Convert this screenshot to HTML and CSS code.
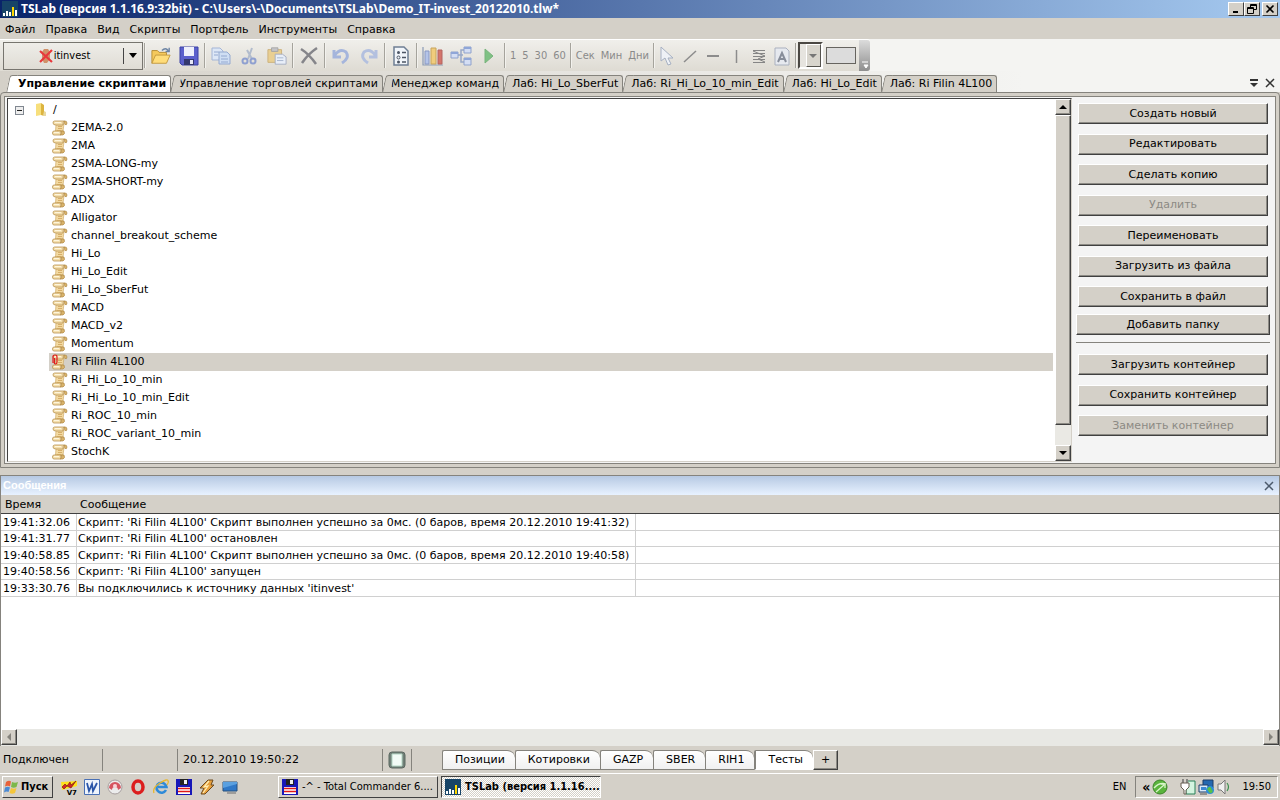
FILE: index.html
```html
<!DOCTYPE html>
<html lang="ru">
<head>
	<meta charset="UTF-8">
	<title>TSLab</title>
<link rel="stylesheet" href="styles.css">
</head>
<body>
<svg class="defs" aria-hidden="true">
	<symbol id="scroll" viewBox="0 0 16 16">
		<path d="M4 4L3.500 11H11l1-7z" fill="#f2d9a2" stroke="#c9a25c" stroke-width=".6"/>
		<path d="M2.500 1h10q-2 1-1.500 4H4Q1 5 1 3t1.500-2z" fill="#f5e0ae" stroke="#b99350" stroke-width=".8"/>
		<path d="M12 1q3-.5 3 2t-2 1.500l-1-1z" fill="#d9b36a" stroke="#a8813e" stroke-width=".6"/>
		<path d="M2 11h7v4H2Q.5 15 .5 13T2 11z" fill="#f5e0ae" stroke="#b99350" stroke-width=".8"/>
		<path d="M9 11h3q1.500 3-1 4H8.500q1.500-2 .5-4z" fill="#d9b36a" stroke="#a8813e" stroke-width=".6"/>
		<path d="M3 2.500h6M2 12.500h5" stroke="#fff6dc"/>
		<path d="M6 6.500h4M6 8.500h4M5 10.500h4" stroke="#cfa45a" stroke-width=".8"/>
	</symbol>
	<symbol id="logo" viewBox="0 0 16 16">
		<path d="M0 0h16v16H0z" fill="#174467"/>
		<path d="M1 12h2v3H1zM4 10h2v5H4zM7 11h2v4H7zM13 9h2v6h-2z" fill="#fff"/>
		<path d="M10 6h2v9h-2z" fill="#ffd800"/>
	</symbol>
	<symbol id="floppy" viewBox="0 0 16 16">
		<path d="M0 0h4v6h8V0h4v16H0z" fill="#1818b8"/>
		<path d="M4 0h8v6H4z" fill="#222"/><path d="M8 1h3v4H8z" fill="#eee"/>
		<path d="M2 8h12v7H2z" fill="#fff"/><path d="M2 9.500h12M2 12.500h12" stroke="#e01818" stroke-width="1.500"/>
	</symbol>
	<symbol id="close" viewBox="0 0 10 10">
		<path d="M1 1l8 8M9 1L1 9" stroke="currentColor" stroke-width="1.500"/>
	</symbol>
</svg>

<div class="app">
	<header class="titlebar">
		<svg class="ico16"><use href="#logo"/></svg>
		<h1>TSLab (версия 1.1.16.9:32bit) - C:\Users\-\Documents\TSLab\Demo_IT-invest_20122010.tlw*</h1>
		<div class="winbtns">
			<button aria-label="Свернуть"><svg viewBox="0 0 10 10"><path d="M2 8h5" stroke="#000" stroke-width="2"/></svg></button>
			<button aria-label="Восстановить"><svg viewBox="0 0 10 10"><path d="M3.500 3.500v-3h6v5h-3M3.500 1.500h6M.5 3.500h6v6h-6zM.5 4.500h6" fill="none" stroke="#000"/></svg></button>
			<button class="last" aria-label="Закрыть"><svg viewBox="0 0 10 10"><path d="M1.500 1.500l7 7M8.500 1.500l-7 7" stroke="#000" stroke-width="1.600"/></svg></button>
		</div>
	</header>

	<nav class="menu">
		<a href="#">Файл</a><a href="#">Правка</a><a href="#">Вид</a><a href="#">Скрипты</a><a href="#">Портфель</a><a href="#">Инструменты</a><a href="#">Справка</a>
	</nav>

	<div class="tray">
		<div class="toolbar">
			<button class="source">
				<span class="source-name"><svg viewBox="0 0 14 16"><path d="M5 1h4l2 3v7l-3 4H5l-2-4V4z" fill="#d09068"/><path d="M1 3l12 11M13 2L1 14" stroke="#e8383c" stroke-width="2.200"/></svg>itinvest</span>
				<span class="drop"></span>
			</button>
			<i class="sep"></i>
			<button class="tool" aria-label="Открыть"><svg viewBox="0 0 22 20"><path d="M1 18V4h6l2 2h8v4" fill="#f5c95c" stroke="#b48a32"/><path d="M1 18L5 9h16l-4 9z" fill="#ffdd7a" stroke="#c1963c"/><path d="M12 4q4-4 7 0M20 1v4h-4" fill="none" stroke="#6c84a4" stroke-width="1.500"/></svg></button>
			<button class="tool" aria-label="Сохранить"><svg viewBox="0 0 20 20"><path d="M1 1h18v18H3l-2-2z" fill="#5b60cc" stroke="#3b40a4"/><path d="M5 1h10v9H5z" fill="#eef0fb"/><path d="M5 13h10v6H5z" fill="#33386e"/><path d="M11 14h3v4h-3z" fill="#e4e6f6"/></svg></button>
			<i class="sep"></i>
			<button class="tool" aria-label="Копировать"><svg viewBox="0 0 20 20"><path d="M1 2h8l3 3v9H1z" fill="#dde7f6" stroke="#a4b5d6"/><path d="M8 6h8l3 3v9H8z" fill="#cfdef3" stroke="#94a9d0"/><path d="M3 6h5M3 9h4M10 10h6M10 13h7M10 16h7" stroke="#94a9d0"/></svg></button>
			<button class="tool" aria-label="Вырезать"><svg viewBox="0 0 20 20"><path d="M13 2L9 13M8 4l5 9" stroke="#b2bccd" stroke-width="2"/><circle cx="6" cy="15" r="2.500" fill="none" stroke="#8fa0d0" stroke-width="2"/><circle cx="14" cy="15" r="2.500" fill="none" stroke="#8fa0d0" stroke-width="2"/></svg></button>
			<button class="tool" aria-label="Вставить"><svg viewBox="0 0 22 20"><path d="M1 3h15v14H1z" fill="#e9cf92" stroke="#cbb07a"/><path d="M5 1h7v4H5z" fill="#c4c4c8" stroke="#a5a5a5"/><path d="M9 8h8l4 3v8H9z" fill="#e8eef8" stroke="#a4acc0"/><path d="M11 12h7M11 15h7" stroke="#a4b4cc"/></svg></button>
			<i class="sep"></i>
			<button class="tool" aria-label="Удалить"><svg viewBox="0 0 20 20"><path d="M2 3q8 5 15 15M18 2Q9 8 3 17" fill="none" stroke="#85858a" stroke-width="2.500"/></svg></button>
			<i class="sep"></i>
			<button class="tool" aria-label="Отменить"><svg viewBox="0 0 20 20"><path d="M3 4v7h7M4 9q5-7 11-3 4 6-4 11" fill="none" stroke="#a5b5dc" stroke-width="3"/></svg></button>
			<button class="tool" aria-label="Повторить"><svg viewBox="0 0 20 20"><path d="M17 4v7h-7M16 9Q11 2 5 6q-4 6 4 11" fill="none" stroke="#b3c0df" stroke-width="3"/></svg></button>
			<i class="sep"></i>
			<button class="tool" aria-label="Свойства"><svg viewBox="0 0 20 20"><path d="M3 1h10l4 4v14H3z" fill="#f1f5fa" stroke="#6f7f94" stroke-width="1.500"/><path d="M11 6.500h4M11 11.500h4M11 16h4" stroke="#4c5564" stroke-width="1.500"/><circle cx="7.500" cy="6.500" r="1.500" fill="#4c5564"/><circle cx="7.500" cy="11.500" r="1.500" fill="none" stroke="#4c5564"/><circle cx="7.500" cy="16" r="1.500" fill="#4c5564"/></svg></button>
			<i class="sep"></i>
			<button class="tool" aria-label="График"><svg class="chart" viewBox="0 0 22 20"><path d="M1 1v18h20" fill="none" stroke="#8b9bb6" stroke-width="1.200"/><path d="M3 5h4v13H3z" fill="#b4c4e8" stroke="#8898c4"/><path d="M9 2h5v16H9z" fill="#f0cc7c" stroke="#c8a45c"/><path d="M16 4h4v14h-4z" fill="#d4746a" stroke="#b46460"/></svg></button>
			<button class="tool" aria-label="Схема"><svg class="chart" viewBox="0 0 22 20"><path d="M8 9h5M13 4H11v12h3M14 4h-2" fill="none" stroke="#98a8c8" stroke-width="1.500"/><path d="M1 6h7v6H1zM14 1h7v6h-7zM14 12h7v7h-7z" fill="#d4def4" stroke="#8fa2cc"/><path d="M1 6h7v2H1zM14 1h7v2h-7zM14 12h7v2h-7z" fill="#8fa6d8"/></svg></button>
			<button class="tool" aria-label="Запуск"><svg viewBox="0 0 20 20"><path d="M6 3l8 7-8 7z" fill="#7fc184" stroke="#79b47d"/></svg></button>
			<i class="sep"></i>
			<button class="word">1</button><button class="word">5</button><button class="word">30</button><button class="word">60</button>
			<i class="sep"></i>
			<button class="word">Сек</button><button class="word">Мин</button><button class="word">Дни</button>
			<i class="sep"></i>
			<button class="tool draw" aria-label="Указатель"><svg viewBox="0 0 20 20"><path d="M4 1v14l4-3 3 7 3-1-3-6h5z" fill="#eef1f6" stroke="#a6b0c2"/></svg></button>
			<button class="tool draw" aria-label="Линия"><svg viewBox="0 0 20 20"><path d="M4 16L16 5" stroke="#8c8c8c" stroke-width="1.500"/></svg></button>
			<button class="tool draw" aria-label="Горизонталь"><svg viewBox="0 0 20 20"><path d="M4 10h12" stroke="#8c8c8c" stroke-width="2"/></svg></button>
			<button class="tool draw" aria-label="Вертикаль"><svg viewBox="0 0 20 20"><path d="M10.500 4v13" stroke="#8c8c8c" stroke-width="1.500"/></svg></button>
			<button class="tool draw" aria-label="Фибоначчи"><svg viewBox="0 0 20 20"><path d="M4 4.500h12M4 7.500h12M4 10.500h12M4 13.500h12M4 16.500h12M4 5l12 5-7 3 7 3" fill="none" stroke="#858585"/></svg></button>
			<button class="tool draw" aria-label="Текст"><svg viewBox="0 0 20 20"><path d="M3 2h11l3 3v14H3z" fill="#e6e9ef" stroke="#aab1bf"/><path d="M6 16l4-9 4 9M8 13h5" fill="none" stroke="#878d9a" stroke-width="2"/></svg></button>
			<i class="sep"></i>
			<button class="color" aria-label="Цвет"><span><b></b></span></button>
			<button class="thick" aria-label="Толщина"></button>
			<button class="grip" aria-label="Ещё"><svg viewBox="0 0 8 8"><path d="M1 1h6M3 4h4L5 7z" stroke="#fff" fill="#fff"/></svg></button>
		</div>
	</div>

	<div class="tabs">
		<button class="tab active">Управление скриптами</button>
		<button class="tab">Управление торговлей скриптами</button>
		<button class="tab">Менеджер команд</button>
		<button class="tab">Лаб: Hi_Lo_SberFut</button>
		<button class="tab">Лаб: Ri_Hi_Lo_10_min_Edit</button>
		<button class="tab">Лаб: Hi_Lo_Edit</button>
		<button class="tab">Лаб: Ri Filin 4L100</button>
		<div class="tabctl">
			<button aria-label="Список вкладок"><svg viewBox="0 0 10 10"><path d="M1 2h8" stroke="#333" stroke-width="2"/><path d="M1 5h8L5 9z" fill="#333"/></svg></button>
			<button aria-label="Закрыть вкладку"><svg><use href="#close"/></svg></button>
		</div>
	</div>

	<main class="dock">
		<div class="dock-in">
			<div class="treebox">
				<ul class="tree">
					<li class="root"><button class="minus" aria-label="Свернуть папку"></button><svg class="folder" viewBox="0 0 16 16"><path d="M3 2l5-1v12l-5 1z" fill="#f7df7c"/><path d="M8 1l3 2v11l-3-1z" fill="#dcb440"/><path d="M11 9l2 1v4h-3z" fill="#e9d9a0"/></svg>/</li>
					<li><svg><use href="#scroll"/></svg>2EMA-2.0</li>
					<li><svg><use href="#scroll"/></svg>2MA</li>
					<li><svg><use href="#scroll"/></svg>2SMA-LONG-my</li>
					<li><svg><use href="#scroll"/></svg>2SMA-SHORT-my</li>
					<li><svg><use href="#scroll"/></svg>ADX</li>
					<li><svg><use href="#scroll"/></svg>Alligator</li>
					<li><svg><use href="#scroll"/></svg>channel_breakout_scheme</li>
					<li><svg><use href="#scroll"/></svg>Hi_Lo</li>
					<li><svg><use href="#scroll"/></svg>Hi_Lo_Edit</li>
					<li><svg><use href="#scroll"/></svg>Hi_Lo_SberFut</li>
					<li><svg><use href="#scroll"/></svg>MACD</li>
					<li><svg><use href="#scroll"/></svg>MACD_v2</li>
					<li><svg><use href="#scroll"/></svg>Momentum</li>
					<li class="sel"><svg viewBox="0 0 16 16"><use href="#scroll"/><path d="M1 9V3q0-2 2-2t2 2v5q0 2-1.500 2T2.500 8V4" fill="none" stroke="#e01c1c" stroke-width="1.200"/></svg>Ri Filin 4L100</li>
					<li><svg><use href="#scroll"/></svg>Ri_Hi_Lo_10_min</li>
					<li><svg><use href="#scroll"/></svg>Ri_Hi_Lo_10_min_Edit</li>
					<li><svg><use href="#scroll"/></svg>Ri_ROC_10_min</li>
					<li><svg><use href="#scroll"/></svg>Ri_ROC_variant_10_min</li>
					<li><svg><use href="#scroll"/></svg>StochK</li>
				</ul>
				<div class="vscroll">
					<button class="sbtn up" aria-label="Вверх"></button>
					<div class="track"><div class="thumb"></div></div>
					<button class="sbtn down" aria-label="Вниз"></button>
				</div>
			</div>
			<aside class="side">
				<div class="group">
					<button>Создать новый</button>
					<button>Редактировать</button>
					<button>Сделать копию</button>
					<button disabled>Удалить</button>
					<button>Переименовать</button>
					<button>Загрузить из файла</button>
					<button>Сохранить в файл</button>
				</div>
				<button class="wide">Добавить папку</button>
				<hr>
				<div class="group short">
					<button>Загрузить контейнер</button>
					<button>Сохранить контейнер</button>
					<button disabled>Заменить контейнер</button>
				</div>
			</aside>
		</div>
	</main>

	<section class="messages">
		<div class="mhead">
			<h2>Сообщения</h2>
			<button aria-label="Закрыть панель"><svg><use href="#close"/></svg></button>
		</div>
		<div class="mbody">
			<table>
				<thead>
					<tr><th class="time">Время</th><th class="text">Сообщение</th><th></th></tr>
				</thead>
				<tbody>
					<tr><td>19:41:32.06</td><td>Скрипт: 'Ri Filin 4L100' Скрипт выполнен успешно за 0мс. (0 баров, время 20.12.2010 19:41:32)</td><td></td></tr>
					<tr><td>19:41:31.77</td><td>Скрипт: 'Ri Filin 4L100' остановлен</td><td></td></tr>
					<tr><td>19:40:58.85</td><td>Скрипт: 'Ri Filin 4L100' Скрипт выполнен успешно за 0мс. (0 баров, время 20.12.2010 19:40:58)</td><td></td></tr>
					<tr><td>19:40:58.56</td><td>Скрипт: 'Ri Filin 4L100' запущен</td><td></td></tr>
					<tr><td>19:33:30.76</td><td>Вы подключились к источнику данных 'itinvest'</td><td></td></tr>
				</tbody>
			</table>
		</div>
		<div class="hscroll">
			<button class="sbtn left" aria-label="Влево"></button>
			<button class="sbtn right" aria-label="Вправо"></button>
		</div>
	</section>

	<footer class="status">
		<span class="cell conn">Подключен</span>
		<span class="cell blank"></span>
		<span class="cell date">20.12.2010 19:50:22</span>
		<span class="cell page"><svg viewBox="0 0 18 18"><rect x="1" y="1" width="16" height="16" rx="3" fill="#718078" stroke="#5b6861"/><path d="M4 3h10v12H4z" fill="#f2fbf6" stroke="#b4d6c4"/></svg></span>
		<div class="sheets">
			<button>Позиции</button>
			<button>Котировки</button>
			<button>GAZP</button>
			<button>SBER</button>
			<button>RIH1</button>
			<button class="on">Тесты</button>
			<button class="plus">+</button>
		</div>
	</footer>

	<div class="taskbar">
		<button class="start"><svg viewBox="0 0 16 16"><path d="M2 3q3-2 5-.5L6 7.500Q4 6 1 7.500z" fill="#e8623a"/><path d="M8 3q3 1.500 6 0l-1.500 5q-3 1.500-5.500 0z" fill="#7cb84a"/><path d="M1 8.500q3-1.500 5 0L4.500 13q-2-1-4.500.5z" fill="#4a8ad4"/><path d="M7 9q3 1.500 5.500 0L11 14q-3 1.500-5.500 0z" fill="#f4c63a"/></svg>Пуск</button>
		<div class="quick">
			<a href="#" aria-label="V7"><svg viewBox="0 0 16 16"><path d="M0 3l16-1v5L1 11z" fill="#ffe21c"/><path d="M1 8l3-3 2 2 3-4 1 3 5-4-5 7-4-2-3 3z" fill="#d42626" stroke="#701010" stroke-width=".6"/></svg><small>V7</small></a>
			<a href="#" aria-label="Word"><svg viewBox="0 0 16 16"><path d="M.5.5h15v15H.5z" fill="#eef4fc" stroke="#4a70b4"/><path d="M3 4l2 8 3-7 1 7 4-8" fill="none" stroke="#2a55a8" stroke-width="1.800"/></svg></a>
			<a href="#" aria-label="Загрузки"><svg viewBox="0 0 16 16"><circle cx="8" cy="8" r="7" fill="#ececec" stroke="#a8a0a0"/><path d="M2 9a6 6 0 0 1 12 0l-3 2a3 3 0 0 0-6 0z" fill="#d65460"/><circle cx="8" cy="7" r="2" fill="#f8d4d8"/></svg></a>
			<a href="#" aria-label="Opera"><svg viewBox="0 0 16 16"><ellipse cx="8" cy="8" rx="5" ry="6" fill="none" stroke="#dc1e1e" stroke-width="3.500"/></svg></a>
			<a href="#" aria-label="Internet Explorer"><svg viewBox="0 0 16 16"><path d="M13 11a5 5 0 1 1 .5-3H5" fill="none" stroke="#2e8ad8" stroke-width="2.500"/><path d="M1 14Q-1 9 7 4t8-2q1 1-1 4" fill="none" stroke="#e8b830" stroke-width="1.300"/></svg></a>
			<a href="#" aria-label="Total Commander"><svg><use href="#floppy"/></svg></a>
			<a href="#" aria-label="Winamp"><svg viewBox="0 0 16 16"><path d="M9 1h5l-2 5h3L6 15H2l3-6H1z" fill="#e8a03c" stroke="#6c4a20"/><path d="M10 2L5 8l4-1-5 7" fill="none" stroke="#fff0b8" stroke-width="1.200"/></svg></a>
			<a href="#" aria-label="Рабочий стол"><svg viewBox="0 0 16 16"><path d="M1 3h14v9H1z" fill="#2f78c8" stroke="#28507c"/><path d="M1 9l14-4v-2H1z" fill="#5aa0e0"/><path d="M5 14h9" stroke="#8c8c8c" stroke-width="1.500"/></svg></a>
		</div>
		<button class="task"><svg><use href="#floppy"/></svg>-^ - Total Commander 6....</button>
		<button class="task current"><svg><use href="#logo"/></svg>TSLab (версия 1.1.16....</button>
		<span class="lang">EN</span>
		<div class="systray">
			<b>«</b>
			<svg viewBox="0 0 16 16"><circle cx="8" cy="8" r="7" fill="#5ab43c" stroke="#3c8428"/><path d="M2 9q5-6 12-4M4 13l8-7M9 5h4v4" fill="none" stroke="#d8f4c8" stroke-width="1.300"/></svg>
			<svg class="plug" viewBox="0 0 16 16"><path d="M8 2h7v13H6V9" fill="#d4f4e0" stroke="#288058"/><path d="M3 0v4M7 0v4" stroke="#555" stroke-width="1.200"/><path d="M1 4h8v4L6 11v4H4v-4L1 8z" fill="#fff" stroke="#665e50"/></svg>
			<svg viewBox="0 0 16 16"><path d="M5 1h10v8H5z" fill="#2468b0" stroke="#1a3c68"/><path d="M1 6h9v7H1z" fill="#d8e8f8" stroke="#1a3c68"/><path d="M3 8h5v3H3z" fill="#3c88d0"/><path d="M2 15h7" stroke="#555"/><circle cx="12" cy="11" r="4" fill="#2c8cd8"/><path d="M9 10q3-4 4-1t2 3q-2 4-4 1z" fill="#58c048"/></svg>
			<svg viewBox="0 0 16 16"><path d="M2 5h3l4-4v14l-4-4H2z" fill="#f0f0f0" stroke="#777"/><path d="M11 4q3 4 0 8" fill="none" stroke="#3c9050" stroke-width="1.200"/></svg>
			<time>19:50</time>
		</div>
	</div>
</div>
</body>
</html>
```
FILE: styles.css
```css
*{box-sizing: border-box;margin: 0;padding: 0;}
body{
	font: 11px/16px "DejaVu Sans",Verdana,sans-serif;color: #000;background: #d4d0c8;
}
button{font: inherit;color: inherit;background: none;border: none;}
a{color: inherit;text-decoration: none;}
svg{display: block;flex: none;}
.defs{position: absolute;width: 0;height: 0;}
.app{height: 100vh;display: flex;flex-direction: column;overflow: hidden;}

/* title */
.titlebar{
	height: 18px;flex: none;display: flex;align-items: center;padding: 0 2px;
	background: linear-gradient(90deg,#0a246a,#a6caf0);
}
.ico16{width: 16px;height: 16px;}
.titlebar h1{
	flex: 1;margin-left: 3px;color: #fff;white-space: nowrap;
	font: bold 12px/18px "Noto Sans","DejaVu Sans Condensed",Tahoma,sans-serif;
}
.winbtns{display: flex;}
.winbtns button{
	width: 16px;height: 14px;background: #d4d0c8;display: flex;align-items: center;justify-content: center;
	border: 1px solid;border-color: #fff #404040 #404040 #fff;
}
.winbtns svg{width: 10px;height: 10px;}
.winbtns .last{margin-left: 2px;}

.menu{height: 21px;flex: none;display: flex;align-items: center;gap: 10px;padding: 2px 5px 0;}

/* toolbar */
.tray{height: 32px;flex: none;background: #f4f4f2;}
.toolbar{
	width: max-content;height: 32px;display: flex;align-items: center;padding-left: 3px;
	background: linear-gradient(#f0efeb,#dedbd3);border-radius: 0 3px 3px 0;
	border-top: 1px solid #fff;
}
.source{
	width: 140px;height: 28px;display: flex;align-items: center;border: 1px solid #77756f;
	font-family: "DejaVu Sans Condensed","DejaVu Sans",Tahoma,sans-serif;
}
.source-name{flex: 1;display: flex;align-items: center;justify-content: center;gap: 1px;padding-left: 2px;}
.source svg{width: 14px;height: 16px;}
.drop{width: 19px;height: 16px;border-left: 1px solid #444;display: flex;align-items: center;justify-content: center;}
.drop::after{content: "";border: 4px solid transparent;border-top: 5px solid #000;border-bottom: 0;}
.sep{width: 2px;height: 25px;margin: 0 1px;border-left: 1px solid #a5a39c;border-right: 1px solid #f3f2ee;flex: none;}
.tool{width: 28px;height: 28px;display: flex;align-items: center;justify-content: center;}
.tool svg{width: 20px;height: 20px;}
.tool .chart{width: 22px;}
.draw{width: 23px;}
.word{
	height: 28px;padding: 0 3px;color: #8a8a8a;
	font-family: "DejaVu Sans Condensed","DejaVu Sans",Tahoma,sans-serif;
}
.color{
	width: 25px;height: 27px;border: 2px solid #4b4843;border-right-color: #fff;border-bottom-color: #fff;
	display: flex;justify-content: flex-end;background: #e6e4df;
}
.color span{
	width: 15px;background: #d8d5cd;border: 1px solid;border-color: #fff #55534e #55534e #fff;
	display: flex;align-items: center;justify-content: center;
}
.color b{border: 4px solid transparent;border-top-color: #777;border-bottom: 0;}
.thick{width: 30px;height: 17px;margin: 0 3px;border: 1px solid #66645f;background: #dcdcdc;}
.grip{
	width: 11px;height: 31px;display: flex;align-items: flex-end;padding: 0 0 2px 2px;
	background: linear-gradient(#dcdcdc,#8e8e8e);border-radius: 0 3px 3px 0;
}
.grip svg{width: 8px;height: 8px;}

/* document tabs */
.tabs{
	height: 21px;flex: none;display: flex;align-items: flex-end;padding-left: 7px;white-space: nowrap;
	background: linear-gradient(90deg,#d4d0c8,#f4f4f2 80%);
}
.tab{
	position: relative;height: 17px;margin-left: 5px;padding: 0 4px 0 3px;background: #d4d0c8;
	border-top: 1px solid #85837d;border-right: 1px solid #85837d;border-radius: 0 3px 0 0;
}
.tab::before{
	content: "";position: absolute;left: -4px;top: -1px;bottom: 0;width: 7px;background: inherit;
	border-left: 1px solid #85837d;border-top: 1px solid #85837d;border-radius: 3px 0 0 0;
	transform: skewX(-12deg);
}
.tab.active{font-weight: bold;background: #fff;padding-left: 6px;}
.tabctl{margin-left: auto;display: flex;gap: 6px;padding: 0 5px 4px 0;color: #333;}
.tabctl button,.tabctl svg{width: 10px;height: 10px;}

/* dock */
.dock{
	height: 376px;flex: none;padding: 3px;background: #d4d0c8;
	border: 1px solid #85837d;border-radius: 4px 4px 0 0;
}
.dock-in{
	height: 100%;display: flex;border: 1px solid #85837d;background: #f4f4f4;padding: 1px 2px;
}
.treebox{
	flex: 1;min-width: 0;display: flex;background: #fff;
	border: 1px solid #404040;border-right-color: #d4d0c8;border-bottom-color: #d4d0c8;
}
.tree{flex: 1;list-style: none;padding: 2px 2px 0 0;}
.tree li{height: 18px;line-height: 18px;margin-left: 41px;padding-left: 3px;display: flex;align-items: center;gap: 3px;}
.tree svg{width: 16px;height: 16px;}
.tree .root{margin-left: 5px;padding-left: 2px;}
.tree .folder{margin: 0 1px 0 6px;}
.tree .sel{background: #d4d0c8;}
.minus{width: 9px;height: 9px;border: 1px solid #808790;background: linear-gradient(#222,#222) center/5px 1px no-repeat #eee;}

/* scrollbars */
.vscroll{width: 16px;display: flex;flex-direction: column;}
.track{flex: 1;background: #eae9e4;}
.thumb{height: 94%;background: #d4d0c8;}
.thumb,.sbtn{border: 1px solid;border-color: #fff #404040 #404040 #fff;box-shadow: inset -1px -1px #8c8a84;}
.sbtn{
	width: 16px;height: 16px;flex: none;background: #d4d0c8;display: flex;align-items: center;justify-content: center;
}
.sbtn::after{content: "";border: 4px solid transparent;}
.up::after{border-bottom-color: #000;border-top: 0;}
.down::after{border-top-color: #000;border-bottom: 0;}
.left::after{border-right-color: #85837d;border-left: 0;}
.right::after{border-left-color: #85837d;border-right: 0;}

/* side buttons */
.side{width: 201px;padding: 5px 3px 0 4px;}
.side button{
	height: 21px;background: #d4d0c8;border: 1px solid;border-color: #fff #404040 #404040 #fff;
	box-shadow: inset -1px -1px #8c8a84;
}
.side button:disabled{color: #8c8a84;}
.group{height: 204px;margin: 0 2px;display: flex;flex-direction: column;justify-content: space-between;}
.short{height: 82px;}
.side .wide{display: block;width: 100%;margin: 7px 0;}
.side hr{border: none;border-top: 1px solid #85837d;margin-bottom: 11px;}

/* messages */
.messages{
	flex: 1;min-height: 0;margin-top: 7px;display: flex;flex-direction: column;background: #fff;
	border: 1px solid #85837d;border-bottom: none;
}
.mhead{
	height: 19px;flex: none;display: flex;align-items: center;justify-content: space-between;padding: 0 5px 0 2px;
	background: linear-gradient(#b6c9e3,#e8f2ff);
}
.mhead h2{font: bold 11px/19px "Liberation Sans",Arial,sans-serif;color: #fff;}
.mhead button{color: #4c5a6c;}
.mhead svg{width: 10px;height: 10px;}
.mbody{flex: 1;min-height: 0;overflow: hidden;}
table{width: 100%;border-collapse: separate;border-spacing: 0;table-layout: fixed;}
th{
	height: 19px;padding: 2px 3px 0;text-align: left;font-weight: normal;background: #d4d0c8;
	border-bottom: 1px solid #404040;
}
.time{width: 76px;}
.text{width: 559px;}
th.time{padding-left: 4px;}
td{
	height: 17px;line-height: 15px;padding: 0 1px;white-space: nowrap;
	border-bottom: 1px solid #d0d0d0;border-right: 1px solid #d0d0d0;
}
td:first-child{padding-left: 2px;}
tr:nth-child(even) td{height: 16px;}
td:last-child{border-right: none;}
.hscroll{height: 17px;flex: none;display: flex;justify-content: space-between;background: #e8e8e4;}

/* status */
.status{height: 27px;flex: none;display: flex;align-items: center;}
.cell{height: 22px;line-height: 22px;border-right: 1px solid #85837d;}
.conn{width: 103px;padding-left: 3px;}
.blank{width: 75px;}
.date{width: 205px;padding-left: 5px;}
.page{width: 29px;padding: 2px 0 0 5px;}
.page svg{width: 18px;height: 18px;}
.sheets{display: flex;align-items: flex-start;height: 20px;margin-left: 30px;}
.sheets button{
	height: 20px;padding: 0 10px 0 12px;background: linear-gradient(#fff,#f0f0f0);
	border: 1px solid #85837d;border-right: none;border-radius: 2px 8px 0 0;
}
.sheets .on{background: #fff;border-bottom-color: #fff;border-left-width: 2px;}
.sheets .plus{
	width: 25px;padding: 0;background: #d4d0c8;border: 1px solid;border-color: #fff #404040 #404040 #fff;
	border-radius: 0;box-shadow: inset -1px -1px #8c8a84;
}

/* taskbar */
.taskbar{
	height: 27px;flex: none;display: flex;align-items: center;padding: 0 2px;border-top: 1px solid #fff;
	font-family: "DejaVu Sans Condensed","DejaVu Sans",Tahoma,sans-serif;
}
.start,.task{
	height: 22px;display: flex;align-items: center;border: 1px solid;
	border-color: #fff #404040 #404040 #fff;white-space: nowrap;overflow: hidden;
}
.start{width: 51px;gap: 1px;padding-left: 1px;font-weight: bold;}
.taskbar svg{width: 16px;height: 16px;}
.quick{width: 225px;display: flex;gap: 7px;padding-left: 8px;}
.quick a{position: relative;}
.quick small{position: absolute;right: 0;bottom: -2px;font: bold 7px/8px "DejaVu Sans",sans-serif;}
.task{width: 160px;padding: 0 3px;gap: 4px;}
.current{
	margin-left: 3px;font-weight: bold;border-color: #404040 #fff #fff #404040;
	background: repeating-conic-gradient(#fff 0 25%,#d4d0c8 0 50%) 0 0/2px 2px;
}
.lang{margin-left: auto;padding-right: 6px;}
.systray{
	height: 22px;display: flex;align-items: center;margin-left: 3px;padding: 0 6px;gap: 2px;
	border: 1px solid;border-color: #85837d #fff #fff #85837d;
}
.systray b{font-size: 14px;line-height: 14px;}
.plug{margin-left: 10px;}
.systray time{margin-left: 8px;}
```
